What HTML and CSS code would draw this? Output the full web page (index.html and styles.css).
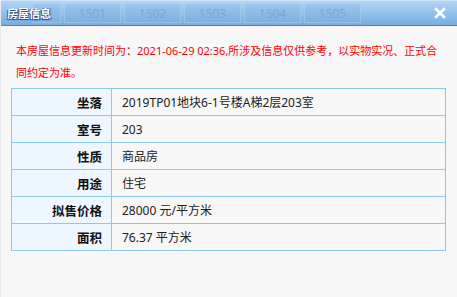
FILE: index.html
```html
<!DOCTYPE html>
<html lang="zh-CN">
<head>
    <meta charset="UTF-8">
    <title>房屋信息</title>
    <link rel="stylesheet" href="styles.css">
</head>
<body>
    <div class="dialog">
        <div class="titlebar">
            <div class="tabs">
                <span class="tab tab-small">层</span>
                <span class="tab">1501</span>
                <span class="tab">1502</span>
                <span class="tab">1503</span>
                <span class="tab">1504</span>
                <span class="tab">1505</span>
            </div>
            <span class="title">房屋信息</span>
            <span class="close">
                <svg width="12" height="12" viewBox="0 0 12 12">
                    <path d="M2 2 L10 10 M10 2 L2 10" stroke="#fff" stroke-width="2.6" stroke-linecap="square"/>
                </svg>
            </span>
        </div>

        <div class="content">
            <p class="notice">本房屋信息更新时间为：2021-06-29 02:36,所涉及信息仅供参考，以实物实况、正式合同约定为准。</p>

            <table class="info">
                <tr><th>坐落</th><td>2019TP01地块6-1号楼A梯2层203室</td></tr>
                <tr><th>室号</th><td>203</td></tr>
                <tr><th>性质</th><td>商品房</td></tr>
                <tr><th>用途</th><td>住宅</td></tr>
                <tr><th>拟售价格</th><td>28000 元/平方米</td></tr>
                <tr><th>面积</th><td>76.37 平方米</td></tr>
            </table>
        </div>
    </div>
</body>
</html>
```

FILE: styles.css
```css
* {
    margin: 0;
    padding: 0;
    box-sizing: border-box;
}

body {
    background: #f7f7f7;
    font-family: "Noto Sans", "Noto Sans CJK SC", sans-serif;
    color: #222;
}

.dialog {
    width: 457px;
    height: 297px;
    background: #f7f7f7;
    border-left: 1px solid #ececec;
}

.titlebar {
    position: relative;
    height: 26px;
    background: linear-gradient(to bottom, #b4d5f4 0%, #97c2ec 45%, #78ade2 100%);
    border-bottom: 1px solid #3f88d2;
    border-top: 1px solid #cde4f9;
}

.tabs {
    display: flex;
    gap: 3px;
    padding: 2px 0 0 31px;
}

.tab {
    width: 57px;
    height: 20px;
    line-height: 19px;
    text-align: center;
    font-size: 12px;
    color: #7ea7d2;
    background: rgba(120, 170, 220, 0.25);
    border: 1px solid rgba(200, 225, 250, 0.35);
}

.tab-small {
    width: 29px;
    color: #6f9acb;
}

.title {
    position: absolute;
    left: 6px;
    top: 4px;
    font-size: 11px;
    line-height: 16px;
    font-weight: bold;
    color: #fff;
    text-shadow: -1px 1px 0 #2d4f8a, 1px 1px 1px #2d4f8a;
    font-family: "Noto Sans CJK SC", sans-serif;
}

.close {
    position: absolute;
    right: 11px;
    top: 6px;
    width: 12px;
    height: 12px;
}

.close svg {
    display: block;
}

.content {
    padding: 14px 15px 0 10px;
}

.notice {
    padding-left: 5px;
    font-size: 11px;
    line-height: 22px;
    color: #f00;
    margin-bottom: 4px;
}

.info {
    width: 435px;
    border-collapse: collapse;
    font-size: 12px;
}

.info th,
.info td {
    height: 27px;
    border: 1px solid #8cc8f4;
}

.info th {
    width: 100px;
    background: #eef6ff;
    text-align: right;
    padding-right: 9px;
    font-size: 12.5px;
    font-weight: bold;
    color: #111;
}

.info td {
    padding-left: 10px;
    text-align: left;
    font-weight: normal;
}
```
